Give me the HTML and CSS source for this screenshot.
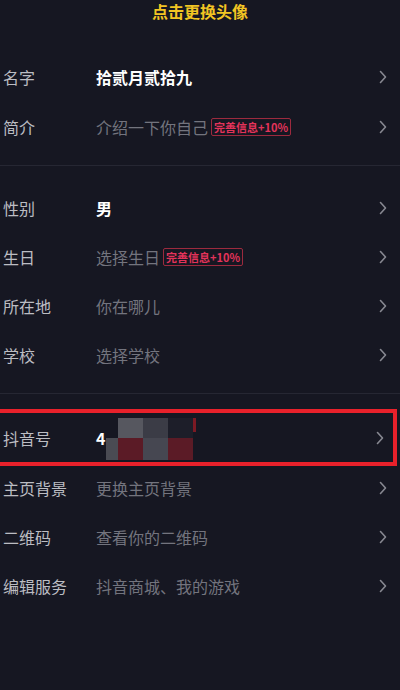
FILE: index.html
```html
<!DOCTYPE html>
<html lang="zh-CN">
<head>
  <meta charset="UTF-8" />
  <meta name="viewport" content="width=device-width, initial-scale=1.0"/>
  <title>编辑资料</title>
  <link rel="stylesheet" href="styles.css">
</head>
<body>

  <div class="avatar-tip">点击更换头像</div>

  <div class="group group-first">
    <div class="row">
      <div class="label">名字</div>
      <div class="value filled">拾贰月贰拾九</div>
      <svg class="chevron" viewBox="0 0 8 14"><polyline points="1.5,1.5 6.5,7 1.5,12.5"/></svg>
    </div>
    <div class="row">
      <div class="label">简介</div>
      <div class="value">介绍一下你自己<span class="tag">完善信息+10%</span></div>
      <svg class="chevron" viewBox="0 0 8 14"><polyline points="1.5,1.5 6.5,7 1.5,12.5"/></svg>
    </div>
  </div>

  <div class="group group-mid">
    <div class="row">
      <div class="label">性别</div>
      <div class="value filled">男</div>
      <svg class="chevron" viewBox="0 0 8 14"><polyline points="1.5,1.5 6.5,7 1.5,12.5"/></svg>
    </div>
    <div class="row">
      <div class="label">生日</div>
      <div class="value">选择生日<span class="tag">完善信息+10%</span></div>
      <svg class="chevron" viewBox="0 0 8 14"><polyline points="1.5,1.5 6.5,7 1.5,12.5"/></svg>
    </div>
    <div class="row">
      <div class="label">所在地</div>
      <div class="value">你在哪儿</div>
      <svg class="chevron" viewBox="0 0 8 14"><polyline points="1.5,1.5 6.5,7 1.5,12.5"/></svg>
    </div>
    <div class="row">
      <div class="label">学校</div>
      <div class="value">选择学校</div>
      <svg class="chevron" viewBox="0 0 8 14"><polyline points="1.5,1.5 6.5,7 1.5,12.5"/></svg>
    </div>
  </div>

  <div class="group group-last">
    <div class="row row-marked">
      <div class="label">抖音号</div>
      <div class="value filled">4<span class="mosaic">
        <i></i><i class="m-gray"></i><i class="m-slate"></i><i class="m-dark"></i><i class="m-red-thin"></i>
        <i class="m-gray2"></i><i class="m-red"></i><i class="m-slate2"></i><i class="m-red"></i><i></i>
      </span></div>
      <svg class="chevron" viewBox="0 0 8 14"><polyline points="1.5,1.5 6.5,7 1.5,12.5"/></svg>
    </div>
    <div class="row">
      <div class="label">主页背景</div>
      <div class="value">更换主页背景</div>
      <svg class="chevron" viewBox="0 0 8 14"><polyline points="1.5,1.5 6.5,7 1.5,12.5"/></svg>
    </div>
    <div class="row">
      <div class="label">二维码</div>
      <div class="value">查看你的二维码</div>
      <svg class="chevron" viewBox="0 0 8 14"><polyline points="1.5,1.5 6.5,7 1.5,12.5"/></svg>
    </div>
    <div class="row">
      <div class="label">编辑服务</div>
      <div class="value">抖音商城、我的游戏</div>
      <svg class="chevron" viewBox="0 0 8 14"><polyline points="1.5,1.5 6.5,7 1.5,12.5"/></svg>
    </div>
  </div>

</body>
</html>
```

FILE: styles.css
```css
body {
  margin: 0;
  background: #161722;
  color: #c4c5ca;
  font-family: 'Noto Sans CJK SC', 'Noto Sans', sans-serif;
  min-height: 100vh;
}

.avatar-tip {
  height: 22px;
  line-height: 22px;
  text-align: center;
  color: #f2c523;
  font-size: 16px;
  font-weight: bold;
}

.group {
  border-bottom: 1px solid #262733;
}

.group-first {
  padding: 30px 0 13px;
}

.group-mid {
  padding: 17px 0 14px;
}

.group-last {
  padding-top: 15px;
  border-bottom: none;
}

.row {
  display: flex;
  align-items: center;
  height: 50px;
  padding-left: 3px;
}

.group-mid .row,
.group-last .row {
  height: 49px;
}

.label {
  width: 93px;
  font-size: 16px;
  color: #bcbdc3;
}

.value {
  flex: 1;
  display: flex;
  align-items: center;
  font-size: 16px;
  color: #73747e;
}

.value.filled {
  color: #fff;
  font-weight: bold;
}

.tag {
  margin-left: 3px;
  padding: 0 2px;
  height: 16px;
  line-height: 16px;
  font-size: 11px;
  font-weight: bold;
  color: #e3335a;
  border: 1px solid #9c2a3e;
  border-radius: 2px;
}

.chevron {
  width: 8px;
  height: 14px;
  margin-right: 13px;
  fill: none;
  stroke: #878891;
  stroke-width: 1.6;
  stroke-linecap: round;
  stroke-linejoin: round;
}

.row-marked {
  height: 47px;
  width: 390px;
  border: 4px solid #e8212b;
  border-left: none;
  margin-bottom: -3px;
}

.row-marked .chevron {
  margin-right: 9px;
}

.mosaic {
  display: inline-grid;
  grid-template-columns: 12px 25px 25px 25px 3px;
  grid-template-rows: 20px 22px;
  margin-left: 1px;
  margin-top: 3px;
}

.m-gray { background: #56575f; }
.m-gray2 { background: #4a4b53; }
.m-slate { background: #3b3c46; }
.m-slate2 { background: #464751; }
.m-dark { background: #1d1e29; }
.m-red { background: #5b1b26; }
.m-red-thin { background: #7c1a24; height: 14px; }
```
